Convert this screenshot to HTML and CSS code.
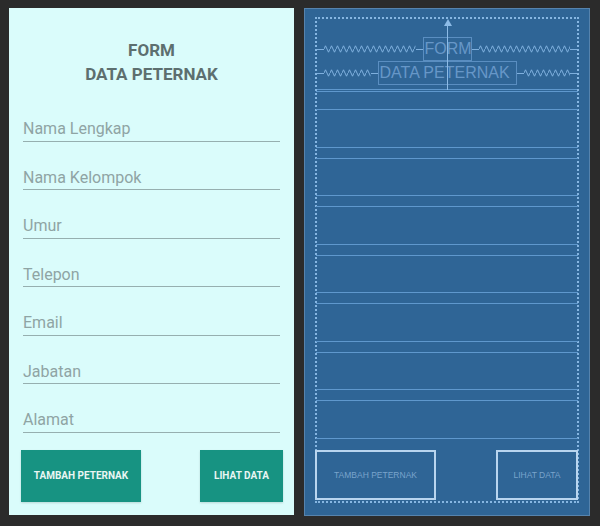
FILE: index.html
```html
<!DOCTYPE html>
<html>
<head>
<meta charset="utf-8">
<link rel="stylesheet" href="styles.css">
</head>
<body>
<div class="stage">
  <section class="design">
    <h1 class="title">FORM<br>DATA PETERNAK</h1>
    <div class="fields">
      <div class="field"><div class="input">Nama Lengkap</div></div>
      <div class="field"><div class="input">Nama Kelompok</div></div>
      <div class="field"><div class="input">Umur</div></div>
      <div class="field"><div class="input">Telepon</div></div>
      <div class="field"><div class="input">Email</div></div>
      <div class="field"><div class="input">Jabatan</div></div>
      <div class="field"><div class="input">Alamat</div></div>
    </div>
    <div class="buttons">
      <div class="btn btn-add">TAMBAH PETERNAK</div>
      <div class="btn btn-view">LIHAT DATA</div>
    </div>
  </section>

  <section class="blueprint">
    <div class="frame">
      <div class="arrow"><div class="arrow-head"></div><div class="arrow-line"></div></div>
      <div class="bp-header">
        <div class="bp-row">
          <div class="spring"><span class="stub"></span><svg class="zig" height="8"><defs><pattern id="zz1" width="6" height="8" patternUnits="userSpaceOnUse"><polyline points="0,4 1.5,0.8 4.5,7.2 6,4" fill="none" stroke="#7fb0de" stroke-width="1"/></pattern></defs><rect width="100%" height="8" fill="url(#zz1)"/></svg><span class="stub"></span></div>
          <div class="bp-box bp-form">FORM</div>
          <div class="spring"><span class="stub"></span><svg class="zig" height="8"><rect width="100%" height="8" fill="url(#zz1)"/></svg><span class="stub"></span></div>
        </div>
        <div class="bp-row">
          <div class="spring"><span class="stub"></span><svg class="zig" height="8"><rect width="100%" height="8" fill="url(#zz1)"/></svg><span class="stub"></span></div>
          <div class="bp-box bp-data">DATA PETERNAK</div>
          <div class="spring"><span class="stub"></span><svg class="zig" height="8"><rect width="100%" height="8" fill="url(#zz1)"/></svg><span class="stub"></span></div>
        </div>
      </div>
      <div class="bp-list">
        <div class="bp-field"></div>
        <div class="bp-field"></div>
        <div class="bp-field"></div>
        <div class="bp-field"></div>
        <div class="bp-field"></div>
        <div class="bp-field"></div>
        <div class="bp-field"></div>
      </div>
      <div class="bp-buttons">
        <div class="bp-btn bp-add">TAMBAH PETERNAK</div>
        <div class="bp-btn bp-view">LIHAT DATA</div>
      </div>
    </div>
  </section>
</div>
</body>
</html>
```

FILE: styles.css
```css
* { box-sizing: border-box; }
html, body { margin: 0; padding: 0; }
body {
  width: 600px;
  height: 526px;
  background: #2b2b2b;
  font-family: Roboto, "Liberation Sans", sans-serif;
  overflow: hidden;
}
.stage {
  display: flex;
  padding: 8px 0 0 9px;
  gap: 10px;
}

/* ---------- design view ---------- */
.design {
  width: 285px;
  height: 507px;
  background: #dafcfb;
  padding: 30px 14px 0 14px;
  display: flex;
  flex-direction: column;
}
.title {
  margin: 0;
  text-align: center;
  font-size: 17px;
  line-height: 24px;
  font-weight: 700;
  color: #5d6f6f;
}
.fields {
  margin-top: 24px;
}
.field {
  height: 48.5px;
  padding-top: 9px;
}
.input {
  height: 22.5px;
  font-size: 16px;
  line-height: 20px;
  color: #8fa4a4;
  border-bottom: 1.5px solid #96afaf;
}
.buttons {
  display: flex;
  justify-content: space-between;
  margin: 0 -3px 0 -2px;
}
.btn {
  height: 52px;
  background: #179382;
  color: #e9f6f3;
  font-size: 10px;
  font-weight: 700;
  display: flex;
  align-items: center;
  justify-content: center;
  box-shadow: 0 1px 2px rgba(0,0,0,0.15);
}
.btn-add { width: 120px; }
.btn-view { width: 83px; }

/* ---------- blueprint view ---------- */
.blueprint {
  width: 286px;
  height: 508px;
  background: #2f6596;
  border: 1px solid #5683ad;
  padding: 8px 10px 12px 10px;
}
.frame {
  position: relative;
  height: 486px;
  border: 2px dotted #86b6e2;
  display: flex;
  flex-direction: column;
}
.arrow {
  position: absolute;
  left: 127px;
  top: 0;
  width: 7px;
  height: 71px;
  display: flex;
  flex-direction: column;
  align-items: center;
}
.arrow-head {
  width: 0;
  height: 0;
  border-left: 4px solid transparent;
  border-right: 4px solid transparent;
  border-bottom: 7px solid #8dbbe6;
}
.arrow-line {
  width: 1px;
  flex: 1;
  background: #8dbbe6;
}
.bp-header {
  padding-top: 18px;
  padding-bottom: 4px;
  border-bottom: 1px solid #5f98cd;
}
.bp-row {
  display: flex;
  align-items: center;
  height: 24px;
}
.spring {
  flex: 1 1 0;
  min-width: 0;
  display: flex;
  align-items: center;
  height: 8px;
}
.stub {
  flex: 0 0 7px;
  height: 1px;
  background: #7fb0de;
}
.zig {
  flex: 1 1 0;
  width: 0;
  min-width: 0;
  display: block;
}
.bp-box {
  flex: 0 0 auto;
  height: 24px;
  border: 1px solid #5a8ec1;
  color: #6797c8;
  font-size: 16px;
  line-height: 22px;
  font-family: "Liberation Sans", Arial, sans-serif;
  white-space: nowrap;
  overflow: hidden;
}
.bp-form { width: 49px; padding-left: 1px; }
.bp-data { width: 139px; padding-left: 1px; }
.bp-list {
  margin-top: 1px;
  border-top: 1px solid #5f98cd;
  padding-top: 17px;
  margin-left: -1px;
  margin-right: -1px;
}
.bp-field {
  height: 38.5px;
  border-top: 1px solid #5f98cd;
  border-bottom: 1px solid #5f98cd;
  margin-bottom: 10px;
}
.bp-field:last-child { margin-bottom: 0; }
.bp-buttons {
  display: flex;
  justify-content: space-between;
  margin: 11px -1px 0 -2px;
}
.bp-btn {
  height: 50px;
  border: 2px solid #b9d5ef;
  color: #7aa4cc;
  font-size: 8.5px;
  font-family: "Liberation Sans", Arial, sans-serif;
  display: flex;
  align-items: center;
  justify-content: center;
}
.bp-add { width: 121px; }
.bp-view { width: 82px; }
```
